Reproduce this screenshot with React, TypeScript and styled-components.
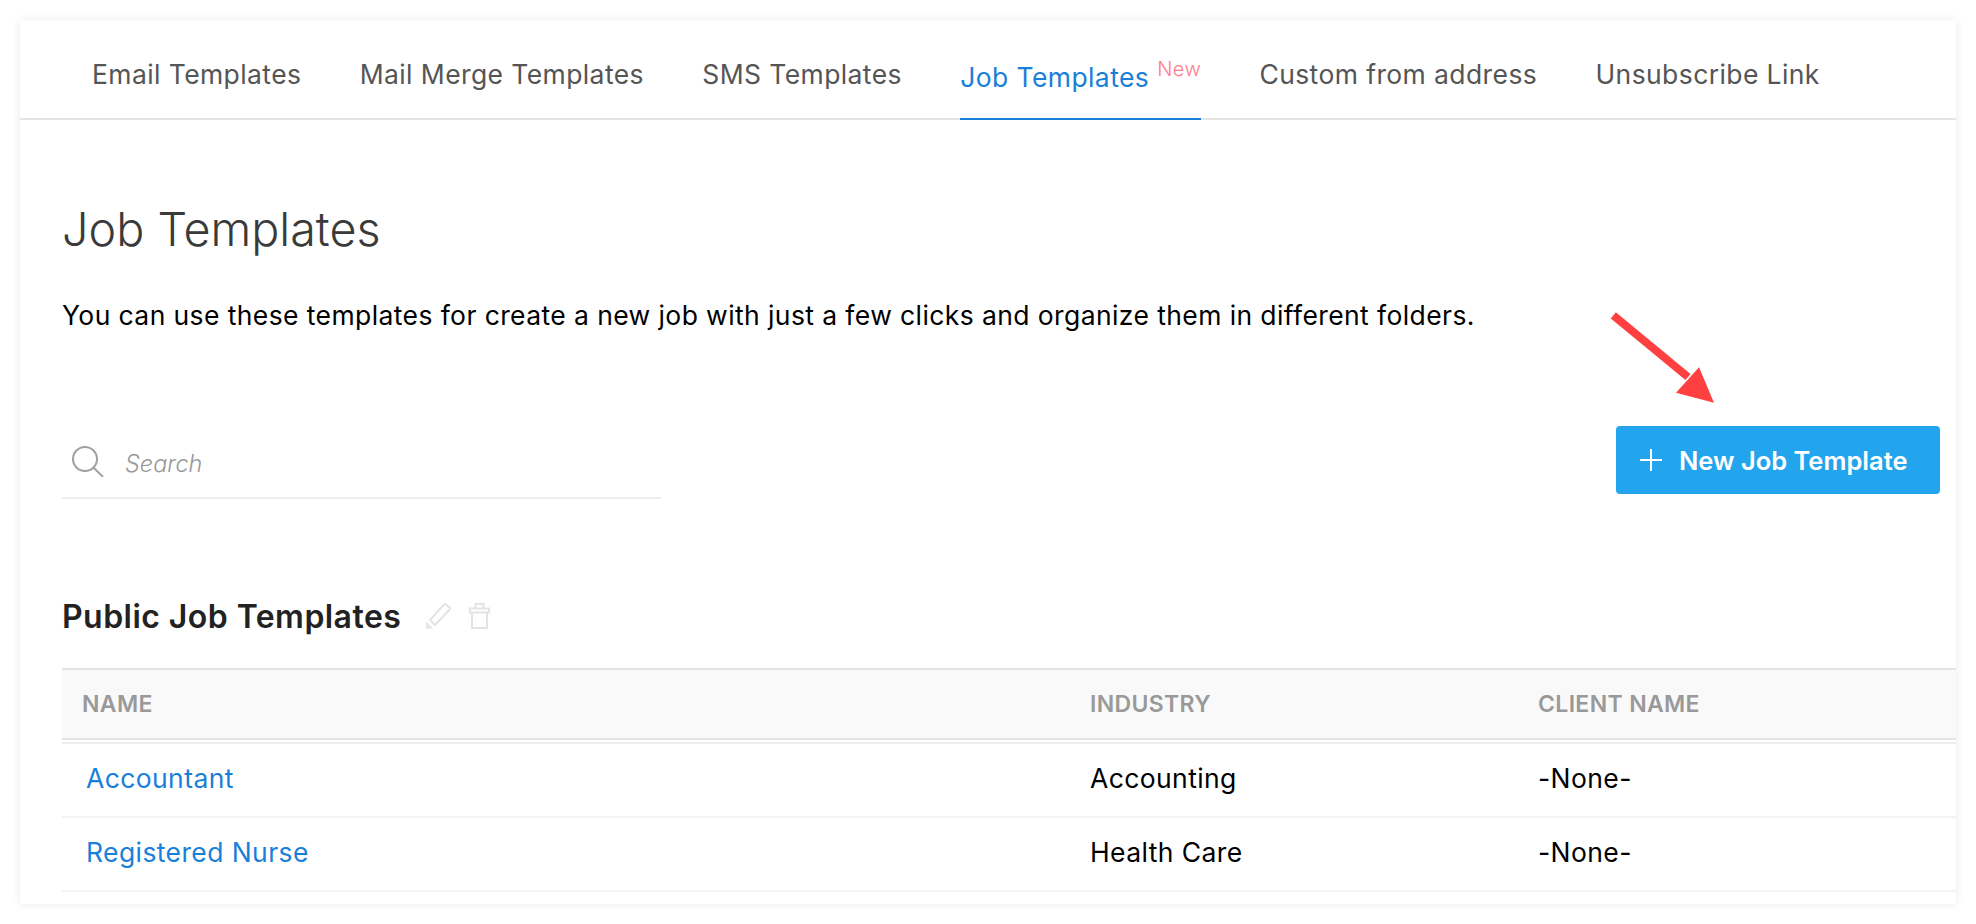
import React from "react";
import styled, { createGlobalStyle } from "styled-components";

const Global = createGlobalStyle`
  html, body { margin: 0; padding: 0; background: #fff; overflow: hidden; }
  body { font-family: "Inter", "Lato", "Liberation Sans", sans-serif; }
`;

const Card = styled.div`
  position: relative;
  box-sizing: border-box;
  width: 1936px;
  height: 884px;
  margin: 20px;
  background: #fff;
  overflow: hidden;
  box-shadow: 0 0 8px rgba(0, 0, 0, 0.09);
`;
const Tabs = styled.nav`
  display: flex;
  gap: 58.3px;
  box-sizing: border-box;
  height: 100px;
  padding-left: 72px;
  border-bottom: 2px solid #e4e4e4;
`;
const Tab = styled.a<{ $active?: boolean }>`
  box-sizing: border-box;
  height: 100px;
  padding-top: ${(p) => (p.$active ? "3px" : "0")};
  line-height: 108px;
  font-size: 26.5px;
  letter-spacing: 0.4px;
  white-space: nowrap;
  color: ${(p) => (p.$active ? "#1a7fd8" : "#555")};
  border-bottom: 2px solid ${(p) => (p.$active ? "#1a7fd8" : "transparent")};
`;
const NewTag = styled.sup`
  font-size: 20px;
  font-weight: 300;
  line-height: 0;
  color: #ff7b8a;
  margin-left: 8px;
  vertical-align: 11px;
`;
const Content = styled.main`
  padding: 84px 0 0 42px;
`;
const Heading = styled.h1`
  margin: 0;
  font-size: 46.7px;
  line-height: 50px;
  font-weight: 300;
  color: #3a3a3a;
`;
const Description = styled.p`
  margin: 44px 0 0;
  font-size: 26.5px;
  letter-spacing: 0.4px;
  line-height: 34px;
  color: #000;
`;
const Toolbar = styled.div`
  display: flex;
  justify-content: space-between;
  align-items: flex-start;
  margin-top: 94px;
  padding-right: 16px;
`;
const SearchBox = styled.div`
  display: flex;
  align-items: flex-start;
  gap: 21px;
  box-sizing: border-box;
  width: 599px;
  height: 73px;
  padding: 20px 0 0 9px;
  border-bottom: 2px solid #eee;
`;
const SearchLabel = styled.span`
  font-size: 23.5px;
  line-height: 36px;
  font-style: italic;
  font-weight: 300;
  color: #999;
`;
const PrimaryButton = styled.button`
  display: flex;
  align-items: center;
  gap: 17px;
  box-sizing: border-box;
  width: 324px;
  height: 68px;
  padding: 0 0 0 24px;
  border: 0;
  border-radius: 4px;
  background: #22a5ec;
  color: #fff;
  font-family: inherit;
  font-size: 25.5px;
  font-weight: 600;
`;
const SectionRow = styled.div`
  display: flex;
  align-items: center;
  gap: 25px;
  margin-top: 97px;
  height: 40px;
`;
const SectionTitle = styled.h2`
  margin: 0;
  padding-top: 2px;
  font-size: 32px;
  letter-spacing: 0.45px;
  line-height: 38px;
  font-weight: 600;
  color: #222;
`;
const SectionIcons = styled.div`
  display: flex;
  align-items: center;
  gap: 18px;
`;
const Table = styled.div`
  margin-top: 32px;
`;
const HeaderRow = styled.div`
  display: grid;
  grid-template-columns: 1028px 448px 1fr;
  align-items: center;
  box-sizing: border-box;
  height: 72px;
  background: #f9f9f9;
  border-top: 2px solid #e4e4e4;
  border-bottom: 2px solid #e4e4e4;
`;
const HeaderCell = styled.div<{ $first?: boolean }>`
  padding-left: ${(p) => (p.$first ? "20px" : "0")};
  font-size: 23px;
  letter-spacing: 0.35px;
  font-weight: 600;
  color: #999;
  text-transform: uppercase;
`;
const HeaderGap = styled.div`
  height: 2px;
  background: #fff;
  border-bottom: 2px solid #eee;
`;
const Row = styled.div`
  display: grid;
  grid-template-columns: 1028px 448px 1fr;
  align-items: center;
  box-sizing: border-box;
  height: 74px;
  padding-bottom: 4px;
  border-bottom: 2px solid #f3f3f3;
`;
const NameLink = styled.a`
  padding-left: 24px;
  font-size: 26.5px;
  letter-spacing: 0.4px;
  color: #1a7fd8;
`;
const Cell = styled.div`
  font-size: 26.5px;
  letter-spacing: 0.4px;
  color: #000;
`;
const Annotation = styled.svg`
  position: absolute;
  left: 1590px;
  top: 290px;
`;

const rows = [
  { name: "Accountant", industry: "Accounting", client: "-None-" },
  { name: "Registered Nurse", industry: "Health Care", client: "-None-" },
];
const tabs = ["Email Templates", "Mail Merge Templates", "SMS Templates"];

export default function App() {
  return (
    <>
      <Global />
      <Card>
        <Tabs>
          {tabs.map((t) => (
            <Tab key={t}>{t}</Tab>
          ))}
          <Tab $active>
            Job Templates<NewTag>New</NewTag>
          </Tab>
          <Tab>Custom from address</Tab>
          <Tab>Unsubscribe Link</Tab>
        </Tabs>
        <Content>
          <Heading>Job Templates</Heading>
          <Description>
            You can use these templates for create a new job with just a few clicks and organize them in different folders.
          </Description>
          <Toolbar>
            <SearchBox>
              <svg width="33" height="31" viewBox="0 0 33 31" fill="none" stroke="#a0a0a0" strokeWidth="2">
                <circle cx="14" cy="13" r="12" />
                <path d="M23 22l9 9" />
              </svg>
              <SearchLabel>Search</SearchLabel>
            </SearchBox>
            <PrimaryButton>
              <svg width="22" height="22" viewBox="0 0 22 22" stroke="#fff" strokeWidth="2" fill="none">
                <path d="M11 0v22M0 11h22" />
              </svg>
              New Job Template
            </PrimaryButton>
          </Toolbar>
          <SectionRow>
            <SectionTitle>Public Job Templates</SectionTitle>
            <SectionIcons>
              <svg width="25" height="26" viewBox="0 0 25 26" fill="none" stroke="#e4e4e4" strokeWidth="2">
                <path d="M4 17L19 .5l5.5 5L9 22z" />
                <path d="M0 25.5v-7l7.3 7z" fill="#e4e4e4" stroke="none" />
              </svg>
              <svg width="21" height="26" viewBox="0 0 21 26" fill="none" stroke="#e4e4e4" strokeWidth="2">
                <path d="M6.5 5V1h8v4M1 5.5h19v4H1zM3 9.5V25h15V9.5" />
              </svg>
            </SectionIcons>
          </SectionRow>
          <Table>
            <HeaderRow>
              <HeaderCell $first>Name</HeaderCell>
              <HeaderCell>Industry</HeaderCell>
              <HeaderCell>Client Name</HeaderCell>
            </HeaderRow>
            <HeaderGap />
            {rows.map((r) => (
              <Row key={r.name}>
                <NameLink>{r.name}</NameLink>
                <Cell>{r.industry}</Cell>
                <Cell>{r.client}</Cell>
              </Row>
            ))}
          </Table>
        </Content>
        <Annotation width="110" height="100" viewBox="0 0 110 100" aria-hidden="true">
          <path d="M3.3 5.3L78 67" stroke="#ff4040" strokeWidth="8" />
          <path d="M104 92.7L66 82.7 89 57.3z" fill="#ff4040" />
        </Annotation>
      </Card>
    </>
  );
}
